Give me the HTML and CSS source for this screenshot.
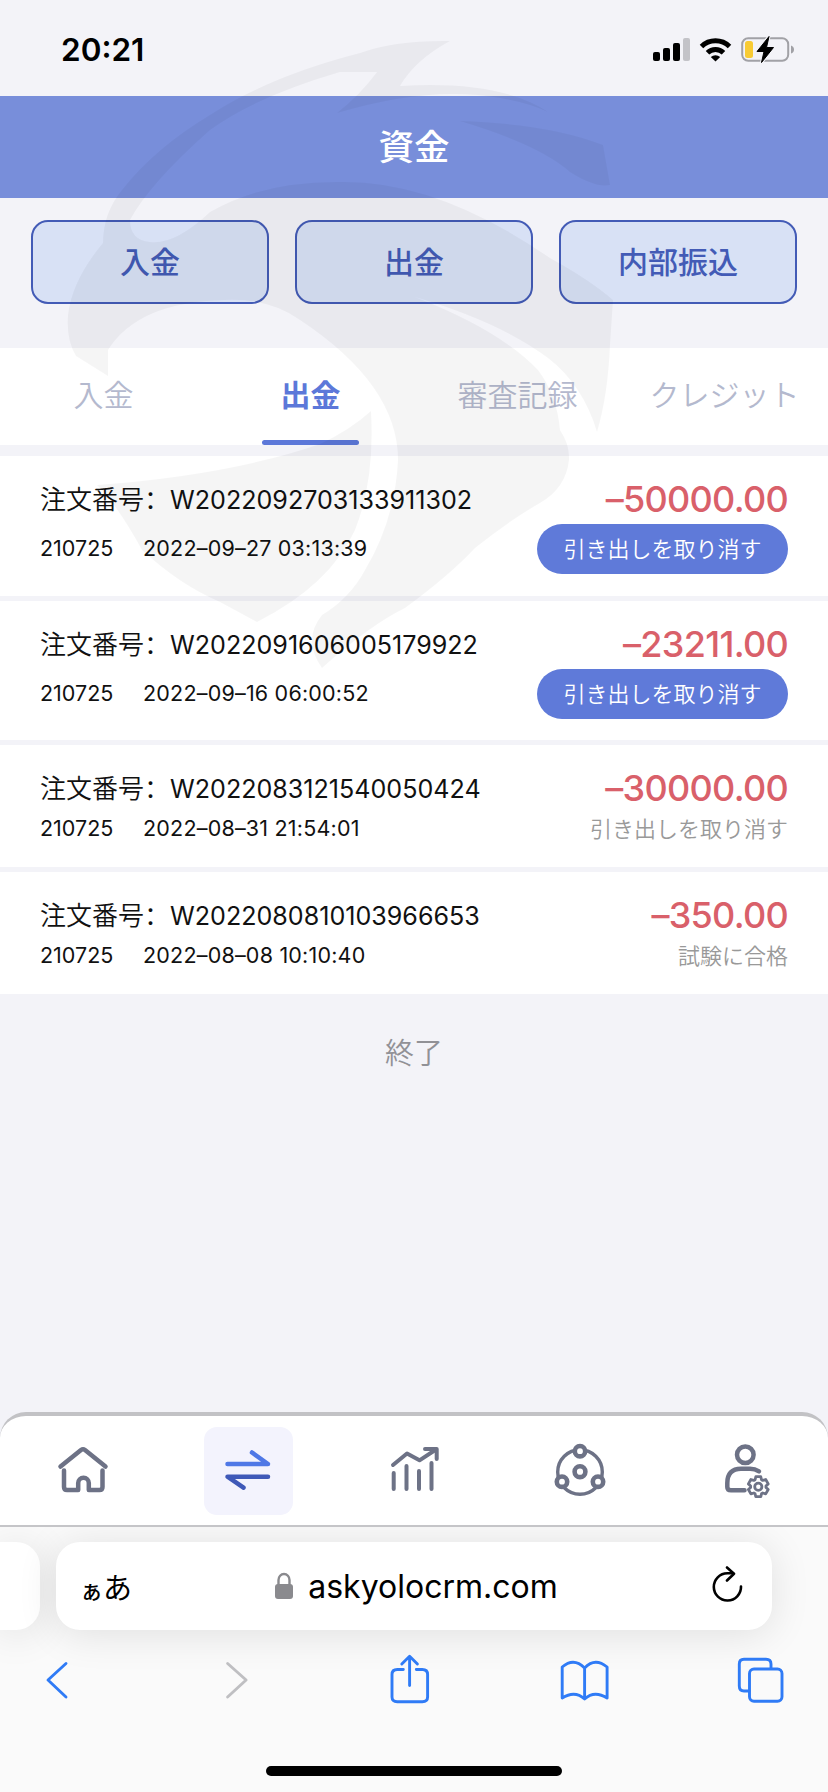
FILE: index.html
```html
<!DOCTYPE html>
<html lang="ja">
  <head>
    <meta charset="utf-8">
    <title>資金</title>
    <link rel="stylesheet" href="styles.css">
  </head>
  <body>
    <div class="status-bar">
      <span class="time">20:21</span>
      <svg class="status-icons" width="144" height="32" viewBox="650 34 144 32">
        <!-- signal -->
        <rect x="653" y="52" width="7" height="9" rx="2"/>
        <rect x="663" y="48" width="7" height="13" rx="2"/>
        <rect x="673" y="43" width="7" height="18" rx="2"/>
        <rect x="683" y="38" width="7" height="23" rx="2" fill="#c3c3c8"/>
        <!-- wifi -->
        <g fill="none" stroke="#000" stroke-width="5">
          <path d="M701.5 46.5a20 20 0 0 1 28 0"/>
          <path d="M707.5 52.8a11.5 11.5 0 0 1 16 0"/>
        </g>
        <path d="M710.8 57a7 7 0 0 1 9.4 0l-4.7 4.5z"/>
        <!-- battery -->
        <rect x="742.2" y="38.2" width="46" height="22.6" rx="6" fill="none" stroke="#a1a1a6" stroke-width="2"/>
        <path d="M791 45.5q3 1 3 4t-3 4z" fill="#a1a1a6"/>
        <rect x="745" y="41" width="8" height="17" rx="2.5" fill="#f8cb34"/>
        <path d="M769 36.5L757 51.5h7L761.5 62.5L773.5 47.5h-7z" stroke="#f3f3f8" stroke-width="3"/>
        <path d="M769 36.5L757 51.5h7L761.5 62.5L773.5 47.5h-7z" stroke="#000"/>
      </svg>
    </div>

    <div class="header">資金</div>

    <div class="actions">
      <button>入金</button>
      <button>出金</button>
      <button>内部振込</button>
    </div>

    <div class="tabs">
      <div class="tab">入金</div>
      <div class="tab active">出金</div>
      <div class="tab">審査記録</div>
      <div class="tab">クレジット</div>
    </div>

    <div class="list">
      <div class="item tall">
        <div class="left">
          <div class="order">注文番号<span class="colon" lang="zh-CN">：</span><span class="num">W2022092703133911302</span></div>
          <div class="meta"><span class="account">210725</span><span class="date">2022–09–27 03:13:39</span></div>
        </div>
        <div class="right">
          <div class="amount">–50000.00</div>
          <div class="cancel-button">引き出しを取り消す</div>
        </div>
      </div>
      <div class="item tall">
        <div class="left">
          <div class="order">注文番号<span class="colon" lang="zh-CN">：</span><span class="num">W2022091606005179922</span></div>
          <div class="meta"><span class="account">210725</span><span class="date">2022–09–16 06:00:52</span></div>
        </div>
        <div class="right">
          <div class="amount">–23211.00</div>
          <div class="cancel-button">引き出しを取り消す</div>
        </div>
      </div>
      <div class="item">
        <div class="left">
          <div class="order">注文番号<span class="colon" lang="zh-CN">：</span><span class="num">W2022083121540050424</span></div>
          <div class="meta"><span class="account">210725</span><span class="date">2022–08–31 21:54:01</span></div>
        </div>
        <div class="right">
          <div class="amount">–30000.00</div>
          <div class="state">引き出しを取り消す</div>
        </div>
      </div>
      <div class="item">
        <div class="left">
          <div class="order">注文番号<span class="colon" lang="zh-CN">：</span><span class="num">W2022080810103966653</span></div>
          <div class="meta"><span class="account">210725</span><span class="date">2022–08–08 10:10:40</span></div>
        </div>
        <div class="right">
          <div class="amount">–350.00</div>
          <div class="state">試験に合格</div>
        </div>
      </div>
    </div>

    <div class="list-end">終了</div>

    <div class="nav">
      <div class="nav-item">
        <svg width="60" height="60" viewBox="0 0 60 60">
          <path d="M7.5 25.5L28 9q2-1.5 4 0L52.5 25.5"/>
          <path d="M11 29.5V46q0 3 3 3H25.2V42a5.3 5.3 0 0 1 10.6 0V49H46.5q3 0 3-3V29.5"/>
        </svg>
      </div>
      <div class="nav-item">
        <div class="nav-active">
          <svg width="60" height="60" viewBox="0 0 60 60">
            <path d="M9.5 23H50L34 11.5" stroke="#4f78e6"/>
            <path d="M50 35.7H9.5L25.5 46.7" stroke="#3f59b8"/>
          </svg>
        </div>
      </div>
      <div class="nav-item">
        <svg width="60" height="60" viewBox="0 0 60 60">
          <g stroke-width="4">
            <path d="M9 24L23 12.5L35.5 19.3L52 8.5"/>
            <path d="M41 8H52.7V18"/>
            <path d="M9.7 32V48M22.5 25V48M35 30V48M47.5 22V48"/>
          </g>
        </svg>
      </div>
      <div class="nav-item">
        <svg width="60" height="60" viewBox="0 0 60 60">
          <circle cx="30" cy="31" r="22.3" stroke-width="3.4"/>
          <g fill="#fff" stroke-width="4.6">
            <circle cx="30" cy="10.2" r="5.2"/>
            <circle cx="30" cy="30.7" r="5.4"/>
            <circle cx="12" cy="40.7" r="5.2"/>
            <circle cx="48" cy="40.7" r="5.2"/>
          </g>
        </svg>
      </div>
      <div class="nav-item">
        <svg width="60" height="60" viewBox="0 0 60 60">
          <circle cx="30.3" cy="13.7" r="8.3"/>
          <path d="M44 30.3Q40 27.7 35 27.7H26Q12.3 27.7 12.3 42V46Q12.3 49.3 16 49.3H29.5"/>
          <g transform="translate(43.3 45.7)" stroke-width="2.8">
            <path d="M-3.2-7L-2.5-10H2.5L3.2-7L4.46-6.27L7.41-7.17L9.91-2.84L7.66-.73V.73L9.91 2.84L7.41 7.17L4.46 6.27L3.2 7L2.5 10H-2.5L-3.2 7L-4.46 6.27L-7.41 7.17L-9.91 2.84L-7.66 .73V-.73L-9.91-2.84L-7.41-7.17L-4.46-6.27Z"/>
            <circle cx="0" cy="0" r="3.6"/>
          </g>
        </svg>
      </div>
    </div>

    <div class="browser">
      <div class="address-row">
        <div class="prev-page"></div>
        <div class="address">
          <div class="reader"><span>ぁ</span>あ</div>
          <div class="site">
            <svg width="20" height="28" viewBox="0 0 20 28">
              <rect x="1" y="12" width="18" height="15" rx="3" fill="#8a8a8e"/>
              <path d="M4.5 13V8a5.5 6 0 0 1 11 0V13" fill="none" stroke="#8a8a8e" stroke-width="2.4"/>
            </svg>
            <span class="url">askyolocrm.com</span>
          </div>
          <svg class="reload" width="34" height="40" viewBox="0 0 34 40">
            <path d="M31 20.5A13.6 13.6 0 1 1 17.4 7.3H23"/>
            <path d="M17 1.5L24 7.7L17 14.5"/>
          </svg>
        </div>
      </div>
      <div class="toolbar">
        <svg width="60" height="60" viewBox="27.5 1650 60 60"><path d="M66.5 1663.5L48.5 1680L66.5 1697"/></svg>
        <svg width="60" height="60" viewBox="203.4 1650 60 60"><path d="M228 1663.5L246.5 1680L228 1697" stroke="#bfbfc2"/></svg>
        <svg width="60" height="60" viewBox="379.2 1650 60 60">
          <path d="M403.5 1669.5H397.5Q392.2 1669.5 392.2 1674.5V1697Q392.2 1701.7 397.5 1701.7H422.5Q427.8 1701.7 427.8 1697V1674.5Q427.8 1669.5 422.5 1669.5H416.5"/>
          <path d="M409.8 1685.5V1656.5M402 1664L409.8 1656.3L417.6 1664"/>
        </svg>
        <svg width="60" height="60" viewBox="555.1 1650 60 60">
          <path d="M584.7 1668Q574 1657 562.3 1667V1698Q575 1690 584.7 1699Q594.4 1690 607.2 1698V1667Q595 1657 584.7 1668V1699"/>
        </svg>
        <svg width="60" height="60" viewBox="731 1650 60 60">
          <path d="M749 1691H744Q739.3 1691 739.3 1686V1664Q739.3 1659.2 744 1659.2H766Q771 1659.2 771 1664V1668"/>
          <rect x="749.5" y="1669" width="32.5" height="32.3" rx="4.5"/>
        </svg>
      </div>
      <div class="home-indicator"></div>
    </div>

    <!-- eagle watermark over the page -->
    <svg class="watermark" width="828" height="700" viewBox="0 0 828 700">
      <path d="M450 41Q395 40 360 53Q270 76 210 115Q155 148 122 190Q103 213 103 243Q72 280 68 315Q66 340 76 356L108 376V350Q138 302 225 300Q270 298 300 320Q398 385 398 460Q395 520 365 570Q350 598 322 615Q302 640 322 668Q370 625 405 608Q450 575 475 548Q510 520 540 503Q566 488 569 460Q570 445 560 430Q557 395 538 370Q500 330 415 297Q500 322 548 358Q583 385 597 432Q608 395 610 345L613 300Q590 280 550 258Q440 182 345 182Q265 180 210 212Q175 245 150 242Q130 240 130 220Q150 183 210 130Q255 97 340 72H377Q360 95 337 113Q430 85 500 98Q530 103 548 112Q500 80 400 86Q415 60 450 41Z"/>
      <path d="M460 121Q550 124 603 145L610 185Q595 188 570 172Q540 145 460 121Z"/>
      <path d="M371 411Q350 430 320 444Q230 475 97 485Q118 506 142 550Q180 585 220 602L257 622Q330 585 355 530Q375 480 371 411Z"/>
    </svg>
  </body>
</html>
```

FILE: styles.css
```css
* {
  box-sizing: border-box;
}

body {
  margin: 0;
  width: 828px;
  height: 1792px;
  display: flex;
  flex-direction: column;
  position: relative;
  overflow: hidden;
  background-color: #f3f3f8;
  color: #111;
  font-family: Inter, "Noto Sans CJK JP", sans-serif;
}

.status-bar {
  height: 96px;
  padding: 0 34px 0 61px;
  display: flex;
  justify-content: space-between;
  align-items: center;
}

.time {
  font-size: 31.5px;
  font-weight: 600;
  color: #000;
  padding-top: 2px;
}

.status-icons {
  margin-top: 4px;
}

.header {
  height: 102px;
  background-color: #788eda;
  color: white;
  font-size: 35.5px;
  font-weight: 500;
  line-height: 103px;
  text-align: center;
}

.actions {
  height: 150px;
  padding: 22px 31px 0;
  display: flex;
  gap: 26px;
}

.actions button {
  flex: 1;
  height: 84px;
  padding: 0 0 4px;
  font-family: inherit;
  font-size: 30px;
  font-weight: 500;
  color: #435bb6;
  background-color: #d8e1f5;
  border: 2px solid #435bb6;
  border-radius: 17px;
}

.tabs {
  height: 97px;
  display: flex;
  background-color: white;
}

.tab {
  flex: 1;
  display: flex;
  flex-direction: column;
  align-items: center;
  justify-content: space-between;
  font-size: 30px;
  font-weight: 350;
  line-height: 95px;
  white-space: nowrap;
  color: #b4b9ce;
}

.tab.active {
  color: #5c78d9;
  font-weight: 700;
}

.tab.active::after {
  content: "";
  width: 97px;
  height: 5px;
  margin-top: -5px;
  border-radius: 3px;
  background-color: #5c78d9;
}

.list {
  margin-top: 11px;
  display: flex;
  flex-direction: column;
  gap: 5px;
}

.item {
  height: 122px;
  padding: 22px 40px 0;
  display: flex;
  justify-content: space-between;
  background-color: white;
}

.item.tall {
  height: 139.5px;
}

.order {
  height: 40px;
  font-size: 26px;
  font-weight: 350;
  line-height: 39px;
}

.colon {
  font-family: "Noto Sans CJK SC", sans-serif;
}

.num {
  font-size: 25.1px;
  font-weight: 400;
}

.meta {
  font-size: 21.5px;
  line-height: 42px;
}

.date {
  letter-spacing: 0.2px;
}

.tall .meta {
  margin-top: 9px;
}

.account {
  display: inline-block;
  width: 103px;
}

.right {
  display: flex;
  flex-direction: column;
  align-items: flex-end;
}

.amount {
  height: 40px;
  font-size: 36px;
  font-weight: 500;
  line-height: 42px;
  letter-spacing: -0.7px;
  color: #d9606a;
}

.cancel-button {
  width: 251px;
  height: 50px;
  margin-top: 6px;
  border-radius: 25px;
  background-color: #5f7ad9;
  color: white;
  font-size: 22px;
  font-weight: 350;
  line-height: 50px;
  text-align: center;
}

.state {
  font-size: 22px;
  font-weight: 350;
  line-height: 44px;
  color: #999;
}

.list-end {
  flex: 1;
  padding-top: 36px;
  font-size: 29px;
  font-weight: 350;
  text-align: center;
  color: #919196;
}

.nav {
  height: 113px;
  display: flex;
  background-color: white;
  border-top: 4px solid #c2c2c5;
  border-radius: 26px 26px 0 0;
}

.nav-item {
  flex: 1;
  display: flex;
  justify-content: center;
  align-items: center;
}

.nav svg {
  fill: none;
  stroke: #6d7286;
  stroke-width: 4.5;
  stroke-linecap: round;
  stroke-linejoin: round;
}

.nav-active {
  width: 89px;
  height: 88px;
  display: flex;
  justify-content: center;
  align-items: center;
  border-radius: 13px;
  background-color: #f3f3fd;
}

.browser {
  height: 267px;
  border-top: 2px solid #c5c5c8;
  background-color: #fafafa;
  overflow: hidden;
}

.address-row {
  display: flex;
  gap: 16px;
  padding-top: 15px;
}

.prev-page,
.address {
  height: 88px;
  background-color: white;
  box-shadow: 0 4px 40px rgba(0, 0, 0, 0.11);
}

.prev-page {
  width: 40px;
  border-radius: 0 24px 24px 0;
}

.address {
  width: 716px;
  padding: 0 28px 0 24px;
  display: flex;
  justify-content: space-between;
  align-items: center;
  border-radius: 24px;
  color: #000;
}

.reader {
  width: 80px;
  font-size: 29px;
}

.reader span {
  font-size: 23px;
  font-weight: 500;
}

.site {
  display: flex;
  align-items: center;
  gap: 14px;
}

.url {
  font-size: 32px;
}

.reload {
  margin-left: 38px;
  fill: none;
  stroke: #000;
  stroke-width: 2.6;
  stroke-linecap: round;
  stroke-linejoin: round;
}

.toolbar {
  display: flex;
  justify-content: space-between;
  padding: 20px 37px 0 27px;
}

.toolbar svg {
  fill: none;
  stroke: #2f7bf6;
  stroke-width: 2.9;
  stroke-linecap: round;
  stroke-linejoin: round;
}

.home-indicator {
  width: 296px;
  height: 10px;
  margin: 56px auto 0;
  border-radius: 5px;
  background-color: #000;
}

.watermark {
  position: absolute;
  top: 0;
  left: 0;
  fill: rgba(0, 0, 0, 0.04);
  pointer-events: none;
}
```
